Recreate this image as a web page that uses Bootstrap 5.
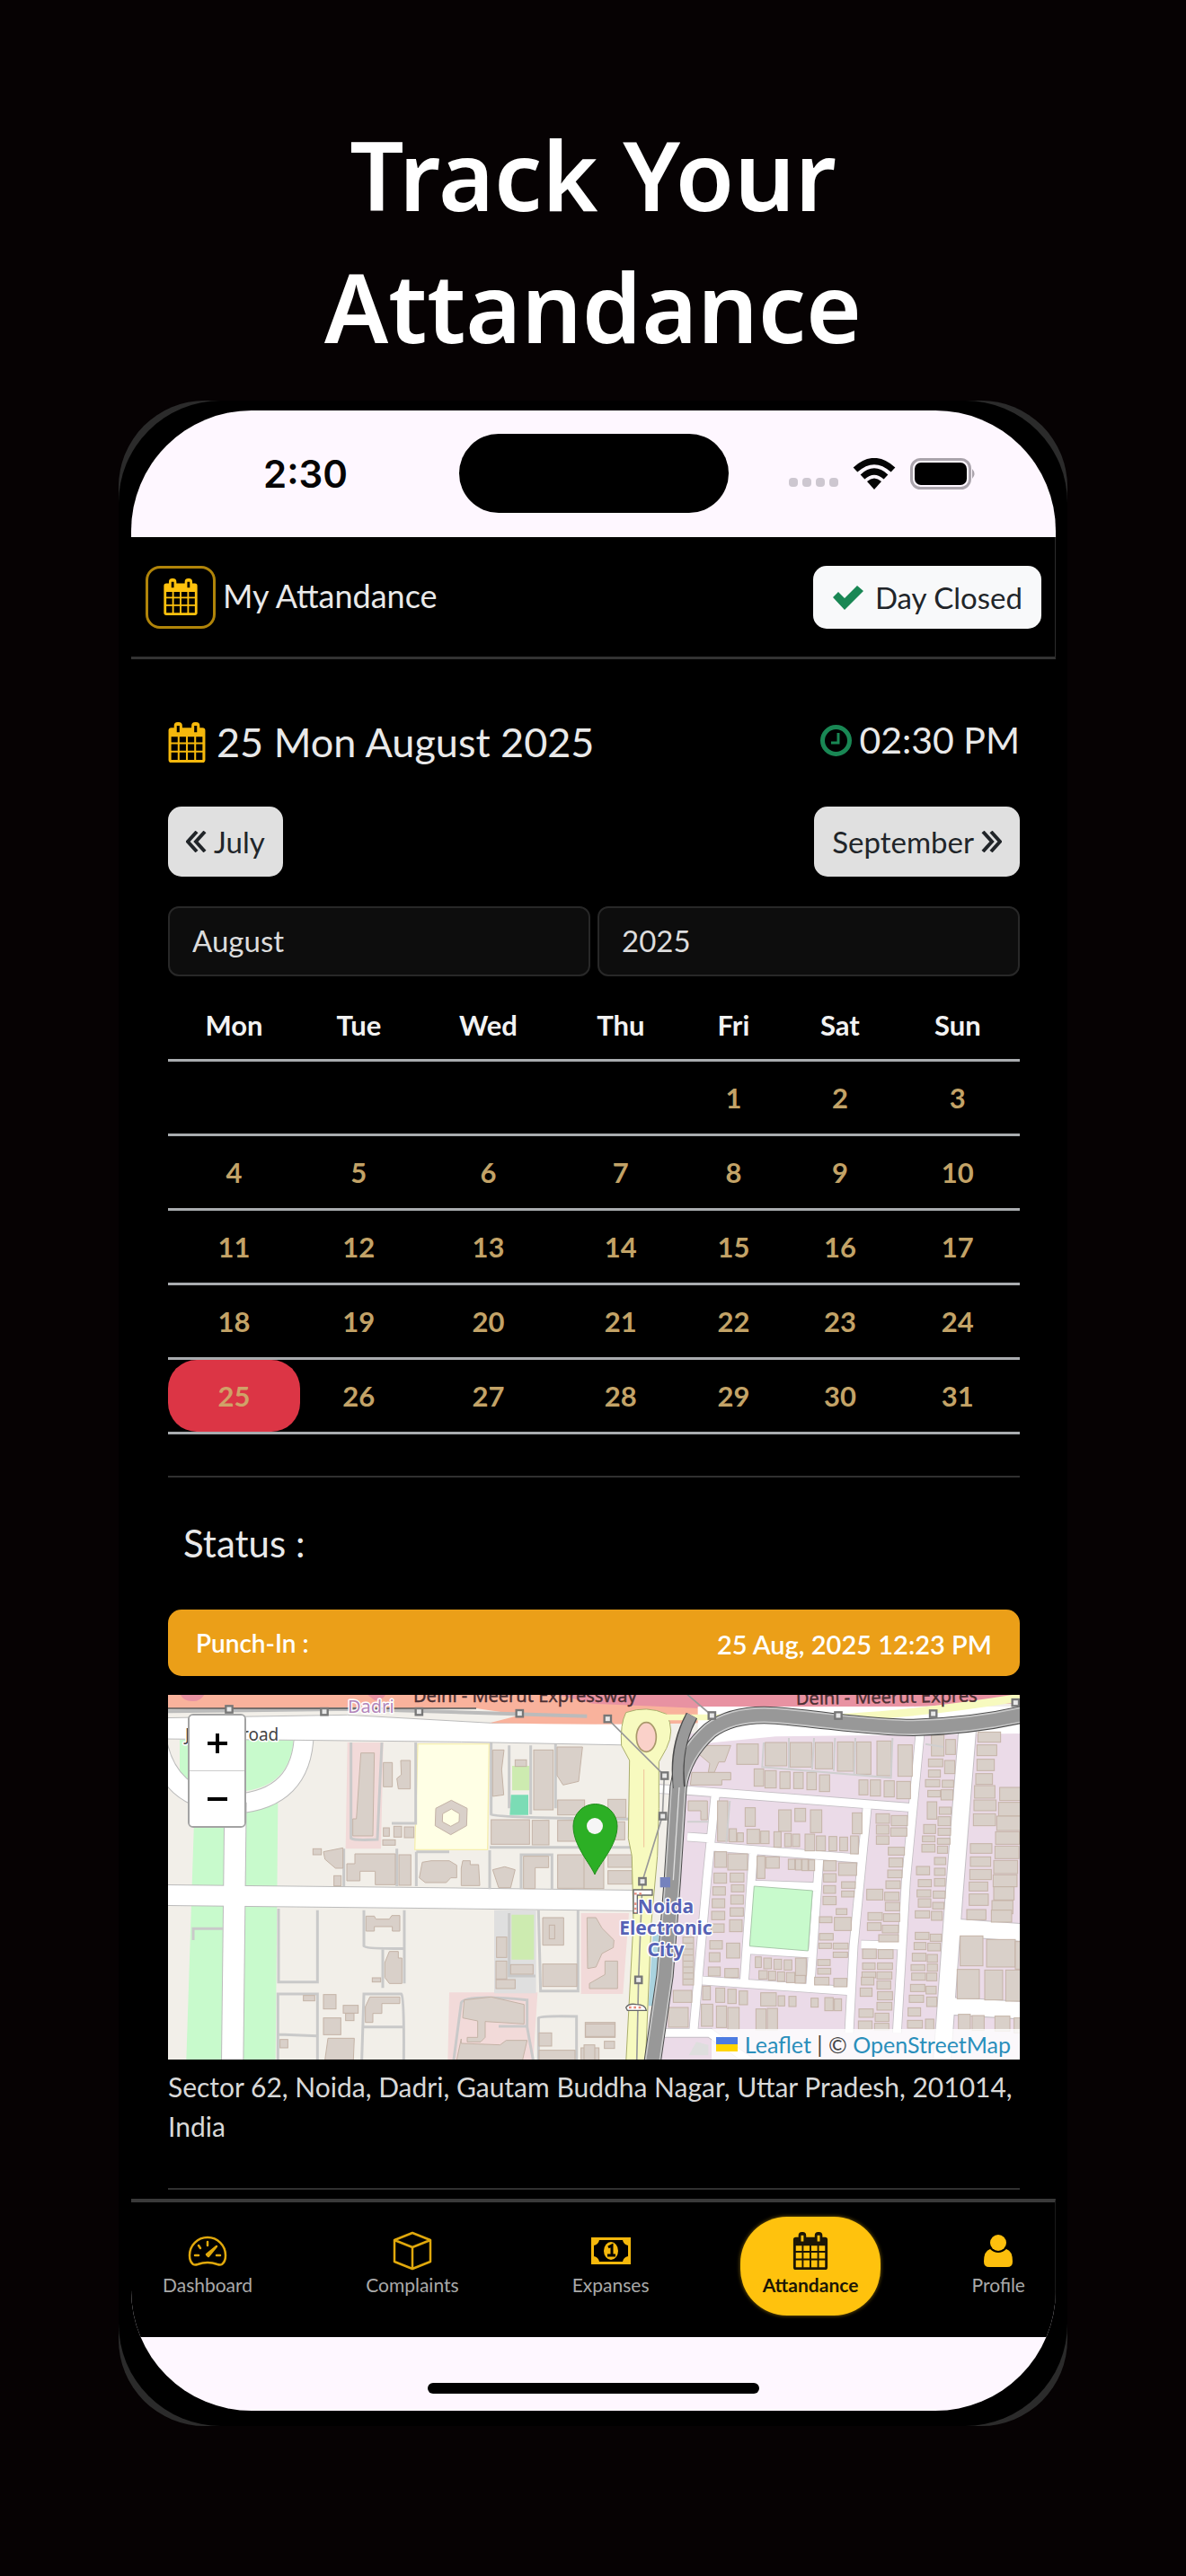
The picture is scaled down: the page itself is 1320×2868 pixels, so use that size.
<!DOCTYPE html>
<html lang="en">
<head>
<meta charset="utf-8">
<meta name="viewport" content="width=device-width, initial-scale=1">
<title>Track Your Attandance</title>
<link rel="stylesheet" href="https://cdn.jsdelivr.net/npm/bootstrap@5.3.0/dist/css/bootstrap.min.css">
<style>
body{background:#060203;font-family:Lato,"Open Sans",sans-serif;color:#e9e9e9}
.hero{font:600 106px/147px "Noto Sans","Open Sans",sans-serif;color:#fff;padding-top:121px;margin-bottom:31px}
.phone{width:80%;margin:0 auto 166px;background:#2b2b2b;border-radius:96px}
.shell{background:#000;border-radius:114px;padding:11px 13px 17px 14px}
.viewport-area{border-radius:134px;overflow:hidden;background:#fef7ff}
.statusbar{height:141px;position:relative;padding:0 88px 0 147px;color:#050505}
.clock-text{font:600 42px/50px Inter,sans-serif}
.island{position:absolute;left:50%;top:26px;width:300px;height:88px;margin-left:-150px;border-radius:44px;background:#000}
.signal{gap:5px}
.signal i{width:10px;height:10px;border-radius:4px;background:#cdc7d0}
.app-area{background:#000}
.apphead{height:136px;border-bottom:3px solid #333;border-right:1px solid #2c2c2c;padding:0 15px 0 16px}
.cal-btn{width:78px;height:70px;border:3px solid #b08409;border-radius:16px;background:none;padding:0}
.title-text{font-size:36px;line-height:44px;padding-bottom:4px}
.pale-btn{border-radius:15px;font-size:33px;line-height:44px;border:0;color:#212529}
.closed-btn{height:70px;background:#f8f9fa;padding:0 21px}
.month-btn{height:78px;background:#e0e0e0;padding:0 20px}
.content-area{padding:65px 40px 0 41px}
.date-row{height:54px;margin-bottom:45px}
.date-text{font-size:45px;line-height:54px}
.time-text{font-size:41px;line-height:54px}
.time-part{padding-bottom:4px}
.picker{appearance:none;height:78px;background:#0d0d0d;border:2px solid #282828;border-radius:12px;color:#dcdcdc;font-size:33px;padding:0 25px;width:100%}
.pickers{gap:8px;margin:33px 0 16px}
.days{width:100%;table-layout:fixed;border-collapse:separate;border-spacing:0;text-align:center;font-size:31px;line-height:40px;font-weight:700;color:#c3a367}
.days th{height:79px;color:#f2f2f2;padding:0;border-bottom:3px solid #a9acaf}
.days td{height:83px;padding:0;border-bottom:3px solid #a9acaf}
.today-cell span{display:flex;align-items:center;justify-content:center;height:80px;background:#dc3545;border-radius:32px;color:#d0a268}
.rule{height:2px;background:#303030}
.month-end{margin-top:46px}
.status-text{font-size:42px;line-height:50px;padding:48px 17px 49px}
.punch{height:74px;border-radius:15px;background:#eb9f18;color:#fff;padding:0 31px;font-weight:600}
.punch-label{font-size:28px;line-height:40px}
.punch-time{font-size:29px;line-height:40px}
.map-box{position:relative;margin-top:21px;overflow:hidden}
.map-box svg.map-art{display:block;width:100%;height:auto}
.zoomer{position:absolute;left:22px;top:21px;width:65px;border:2px solid #a3a3a3;border-radius:6px;overflow:hidden;background:#fff}
.zoomer button{display:flex;align-items:center;justify-content:center;width:100%;height:61px;border:0;background:#fff;padding:0}
.zoomer button+button{border-top:1px solid #ccc;height:62px}
.attrib{position:absolute;right:0;bottom:0;height:34px;background:rgba(255,255,255,.8);padding:0 10px 0 5px;font-size:25px;line-height:34px;color:#444}
.attrib a{color:#2a8fbb;text-decoration:none}
.address{font-size:30px;line-height:44px;margin:8px 0 47px;color:#d8d8d8}
.tabbar{margin-top:10px;height:154px;border-top:4px solid #3a3a3a;border-right:1px solid #1a1a1a;padding:16px 8px 24px 10px}
.tabbar a{display:flex;flex-direction:column;align-items:center;height:110px;padding:16px 25px 0;border-radius:52px;text-decoration:none;color:#a9a9a9;font-size:21px;line-height:28px;gap:2px}
.tabbar a svg{height:44px;width:44px;color:#e0a80c}
.tabbar a.on{background:#ffc20d;color:#1c1606;font-weight:700;box-shadow:0 0 4px #8a6a0a}
.tabbar a.on svg{color:#1c1606}
.homebar{height:82px;padding-top:51px}
.homebar div{width:369px;height:12px;border-radius:6px;background:#000}
</style>
<script src="https://cdn.jsdelivr.net/npm/bootstrap@5.3.0/dist/js/bootstrap.bundle.min.js"></script>
</head>
<body>
<svg width="0" height="0" class="position-absolute" aria-hidden="true">
  <symbol id="cal" viewBox="0 0 40 44"><path fill="currentColor" fill-rule="evenodd" d="M3 6H6V4Q6 0 10 0H11Q15 0 15 4V6H25V4Q25 0 29 0H30Q34 0 34 4V6H37Q40 6 40 9V41Q40 44 37 44H3Q0 44 0 41V9Q0 6 3 6ZM9 4V11H12V4ZM28 4V11H31V4ZM3 16V22H10V16ZM12 16V22H19V16ZM21 16V22H28V16ZM30 16V22H37V16ZM3 24V31H10V24ZM12 24V31H19V24ZM21 24V31H28V24ZM30 24V31H37V24ZM3 33V41H10V33ZM12 33V41H19V33ZM21 33V41H28V33ZM30 33V41H37V33Z"/></symbol>
</svg>

<h1 class="hero text-center">Track Your<br>Attandance</h1>

<main class="phone"><div class="shell"><div class="viewport-area">
  <div class="statusbar d-flex align-items-center justify-content-between">
    <span class="clock-text">2:30</span>
    <div class="island"></div>
    <div class="d-flex align-items-end">
      <div class="signal d-flex me-3 pb-1"><i></i><i></i><i></i><i></i></div>
      <svg class="me-3" width="48" height="36" viewBox="0 0 48 36" fill="none" stroke="#050505" stroke-width="7"><path d="M3 13Q24-6 45 13"/><path d="M11 21Q24 9 37 21"/><path d="M16 26Q24 19 32 26L24 35Z" fill="#050505" stroke="none"/></svg>
      <svg width="74" height="36" viewBox="0 0 74 36"><rect x="1.500" y="1.500" width="65" height="32" rx="10" fill="none" stroke="#aaa4ac" stroke-width="3"/><rect x="5" y="5" width="58" height="25" rx="7" fill="#000"/><path d="M69 12Q74 17.500 69 23Z" fill="#aaa4ac"/></svg>
    </div>
  </div>

  <div class="app-area">
    <header class="apphead d-flex align-items-center justify-content-between">
      <div class="d-flex align-items-center">
        <button class="cal-btn d-flex align-items-center justify-content-center" aria-label="Calendar"><svg width="38" height="41" color="#ffc20d"><use href="#cal"/></svg></button>
        <span class="title-text ms-2">My Attandance</span>
      </div>
      <button class="pale-btn closed-btn d-flex align-items-center"><svg class="me-2" width="36" height="30" viewBox="0 0 36 30"><path d="M1 15L7 9L14 16L28 2L35 8L14 29Z" fill="#198754"/></svg><span class="ps-1">Day Closed</span></button>
    </header>

    <section class="content-area">
      <div class="date-row d-flex align-items-center justify-content-between">
        <div class="d-flex align-items-center"><svg class="me-2" width="42" height="45" color="#f5b80c"><use href="#cal"/></svg><span class="date-text ps-1">25 Mon August 2025</span></div>
        <div class="time-part d-flex align-items-center"><svg class="me-2" width="35" height="35" viewBox="0 0 35 35" fill="none" stroke="#198754"><circle cx="17.500" cy="17.500" r="15" stroke-width="5"/><path d="M20 9V20H12" stroke-width="3"/></svg><span class="time-text">02:30 PM</span></div>
      </div>
      <div class="d-flex justify-content-between">
        <button class="pale-btn month-btn d-flex align-items-center"><svg class="me-2" width="23" height="24" viewBox="0 0 23 24" fill="none" stroke="#212529" stroke-width="4"><path d="M12 1L2 12L12 23M21 1L11 12L21 23"/></svg>July</button>
        <button class="pale-btn month-btn d-flex align-items-center">September<svg class="ms-2" width="23" height="24" viewBox="0 0 23 24" fill="none" stroke="#212529" stroke-width="4"><path d="M11 1L21 12L11 23M2 1L12 12L2 23"/></svg></button>
      </div>
      <div class="pickers d-flex">
        <select class="picker" aria-label="Month"><option>August</option></select>
        <select class="picker" aria-label="Year"><option>2025</option></select>
      </div>
      <table class="days">
        <colgroup><col style="width:15.500%"><col style="width:13.800%"><col style="width:16.600%"><col style="width:14.500%"><col style="width:12%"><col style="width:13%"><col></colgroup>
        <thead><tr><th>Mon</th><th>Tue</th><th>Wed</th><th>Thu</th><th>Fri</th><th>Sat</th><th>Sun</th></tr></thead>
        <tbody>
          <tr><td></td><td></td><td></td><td></td><td>1</td><td>2</td><td>3</td></tr>
          <tr><td>4</td><td>5</td><td>6</td><td>7</td><td>8</td><td>9</td><td>10</td></tr>
          <tr><td>11</td><td>12</td><td>13</td><td>14</td><td>15</td><td>16</td><td>17</td></tr>
          <tr><td>18</td><td>19</td><td>20</td><td>21</td><td>22</td><td>23</td><td>24</td></tr>
          <tr><td class="today-cell"><span>25</span></td><td>26</td><td>27</td><td>28</td><td>29</td><td>30</td><td>31</td></tr>
        </tbody>
      </table>
      <div class="rule month-end"></div>
      <div class="status-text">Status :</div>
      <div class="punch d-flex align-items-center justify-content-between"><span class="punch-label">Punch-In :</span><span class="punch-time pt-1">25 Aug, 2025 12:23 PM</span></div>

      <div class="map-box">
        <svg class="map-art" viewBox="0 0 948 406" role="img" aria-label="Street map">
          <rect width="948" height="406" fill="#f2efe9"/>
          <g transform="translate(-7 -7) scale(.33333)">
            <!-- west half: parks, roads, plots -->
            <path d="M60 170H440Q430 320 280 342H60Z" fill="#c8facc"/>
            <path d="M110 380H388L380 1240H82Z" fill="#c8facc"/>
            <path d="M-20 150Q10 380 245 385Q470 370 475 150" fill="none" stroke="#bbb" stroke-width="68"/>
            <path d="M-20 150Q10 380 245 385Q470 370 475 150" fill="none" stroke="#fff" stroke-width="62"/>
            <path d="M246 380L236 1250" stroke="#bbb" stroke-width="76" fill="none"/>
            <path d="M0 690L800 698L1590 708" stroke="#bbb" stroke-width="72" fill="none"/>
            <path d="M246 380L236 1250" stroke="#fff" stroke-width="70" fill="none"/>
            <path d="M0 690L800 698L1590 708" stroke="#fff" stroke-width="66" fill="none"/>
            <path d="M620 180H740L732 535H614ZM960 1015H1255L1240 1250H955ZM1400 750H1560L1540 1020H1400Z" fill="#f2dad9"/>
            <path d="M855 185H1093L1088 538H845Z" fill="#ffffe5" stroke="#f5eeb0" stroke-width="4"/>
            <path d="M1110 740H1250V1018H1110Z" fill="#dfdfdf"/>
            <path d="M1168 755H1243V905H1168ZM1170 258H1228V340H1170Z" fill="#cdebb0"/>
            <path d="M1166 355H1224V422H1162Z" fill="#7bdcb5"/>
            <g fill="none" stroke="#c9c9c9" stroke-width="9"><path d="M632 180V500Q640 508 720 504L735 180M848 180V450H768M1100 180V420Q1110 432 1600 436M1315 180V400M1095 530H1600M1095 540V670M850 545H960M850 545V660M608 535V660M785 535V660M1200 670V555H1303V670M390 735V980H520V740M388 1240V1020H520V1240M390 1155L520 1160M675 740V860Q680 870 808 868M810 740V985M738 870V1000M668 1240L675 1020H800Q810 1030 808 1240M670 1130H808M1160 750V960H1248M1258 740L1265 1010H1390V740M1258 1240V1100Q1260 1092 1385 1095V1240M975 1240L1000 1050Q1010 1020 1220 1040V1130L1240 1240M1125 1128H1220M105 840V802H205M1160 190V400M1232 190V420"/></g>
            <g fill="#d9d0c9" stroke="#c4b3a6" stroke-width="3">
              <path d="M665 215H710L705 492H638V435H650Z"/>
              <path d="M645 552H780V655H713V610H662V642H618V585H645Z"/>
              <path fill-rule="evenodd" d="M967 373L1020 400L1018 458L965 488L913 458L915 400ZM967 402L938 418L937 445L965 460L993 445L994 418Z"/>
              <path d="M870 580L900 575H960L985 590V632H965L950 648H880L860 632ZM1005 575H1030V588H1058L1062 658H1000V600ZM1105 605L1145 595L1180 605L1165 665H1125ZM1208 560H1292V598H1247V668H1208Z"/>
              <path d="M798 240H830V335H790L785 300L800 288ZM740 247H770V328H740ZM540 545L605 532V600H580L545 570ZM1105 205H1143L1135 270L1142 355L1105 360ZM1320 195H1405L1392 310L1340 322L1320 290Z"/>
              <path d="M682 760H710L715 770H760L768 758H795V810H770V795H710V810H682ZM760 878H790V900H802V985H760L745 965V915ZM695 1030H795V1052H735V1085H705V1115H680V1062Z"/>
              <path d="M1010 1040L1100 1030L1210 1055V1120L1080 1112V1165L1065 1180H1020V1165H1055V1110L1005 1100ZM1000 1170V1185L1130 1190L1150 1175H1220L1205 1240H985ZM555 1168H643L640 1240H545ZM1272 765H1342V857H1272Z"/>
              <g data-plots="792,555,40,102;740,465,20,28;775,460,26,36;810,462,32,36;738,505,42,18;505,535,28,20;575,625,24,34;1180,238,38,22;1242,205,65,200;1100,438,128,82;1237,440,56,82;1322,440,90,70;1322,372,90,50;1322,555,90,112;1118,830,34,68;1116,910,36,60;1165,922,75,32;1116,972,64,30;1272,920,114,75;540,1022,42,48;540,1100,58,56;606,1058,50,26;614,1085,28,24;473,1025,38,18;395,1172,26,28;703,966,28,14;1260,1150,42,44;1260,1208,120,34;1414,1115,100,50;1400,1200,60,40;1294,790,18,46"></g>
            </g>
            <!-- north side: expressway and service road -->
            <path d="M0 98L620 88L1100 115L1620 110V190L1000 178L440 172L0 168Z" fill="#fff" stroke="#bbb" stroke-width="3"/>
            <path d="M0 10H1900V112Q1500 125 1095 115L1200 88L1050 66L0 66Z" fill="#f9b29c"/>
            <path d="M60 15H145Q130 45 100 42Q70 42 60 15ZM680 15H750Q740 40 712 40ZM1320 20L2900 10V48L2300 66H1800L1440 50Z" fill="#e892a2"/>
            <path d="M0 76L640 68L1420 92" stroke="#bbb" stroke-width="12" fill="none"/>
            <path d="M0 66H1050" stroke="#555" stroke-width="5"/>
          </g>
          <g transform="translate(463 -7) scale(.33333)">
            <!-- east half: housing sectors -->
            <path d="M340 150L1470 110V1260H230L270 1100Z" fill="#ebdbe8"/>
            <path d="M380 185L640 160L1460 150V60H380Z" fill="#fff"/>
            <path stroke="#c4bfc4" fill="none" stroke-width="32" d="M250 335L345 340L1100 398M438 360L410 640L365 1150M430 528L925 568M345 495L420 500M565 550L535 980M570 655L780 662M785 572L755 1000M395 975L890 1010M945 400L900 860L885 1150M925 855L1060 858M550 872L760 885M1122 150L1075 640L1045 1150M270 1150H420L560 1250"/>
            <path stroke="#fff" fill="none" stroke-width="27" d="M250 335L345 340L1100 398M438 360L410 640L365 1150M430 528L925 568M345 495L420 500M565 550L535 980M570 655L780 662M785 572L755 1000M395 975L890 1010M945 400L900 860L885 1150M925 855L1060 858M550 872L760 885M1122 150L1075 640L1045 1150M270 1150H420L560 1250"/>
            <path d="M1280 140L1235 700L1195 1250M1240 798L1470 815M1225 1060L1470 1075" stroke="#c4bfc4" stroke-width="62" fill="none"/>
            <path d="M1280 140L1235 700L1195 1250M1240 798L1470 815M1225 1060L1470 1075" stroke="#fff" stroke-width="56" fill="none"/>
            <path d="M568 660L763 675L748 876L553 860Z" fill="#c8facc" stroke="#a8c8aa" stroke-width="3"/>
            <g fill="#d9d0c9" stroke="#c4b3a6" stroke-width="3">
              <path d="M400 190H490L470 245H450L435 280H415L420 250L385 220ZM360 280H490V305H460V322H355ZM348 375H412V438H390V408H348ZM10 765H40L60 800L100 840L98 865L60 885L40 930L12 935ZM70 910H112V1002H18V985L70 955Z"/>
              <g data-plots="510,185,72,68;605,180,72,78;688,180,72,82;772,180,58,88;846,178,54,98;910,178,48,108;978,175,48,116;1048,188,48,105;568,268,32,58;604,274,38,58;654,278,34,56;700,280,32,54;744,280,32,58;786,288,34,56;918,305,30,50;956,305,34,54;1002,308,34,54;1044,310,46,58;446,375,34,135;538,398,34,62;650,405,42,72;704,400,36,44;756,405,38,76;896,415,32,70;485,468,24,44;512,482,20,30;544,470,42,48;590,476,28,42;634,478,24,52;670,484,22,44;696,486,24,42;738,486,32,56;776,492,30,50;818,494,26,48;854,496,26,46;890,492,26,60;436,545,40,52;480,552,66,54;578,560,26,74;608,562,44,38;682,570,22,34;706,570,20,36;728,570,20,38;750,572,20,36;434,616,42,34;430,662,42,28;428,702,42,30;426,744,44,28;424,786,44,28;420,842,42,28;418,882,36,30;415,930,40,30;488,616,46,30;492,655,42,24;490,690,42,30;488,732,44,28;486,772,42,40;476,850,44,50;470,935,46,30;800,575,42,34;850,582,60,42;800,618,42,28;860,645,46,22;800,658,40,26;860,676,42,20;798,694,44,28;842,735,36,20;786,762,42,20;836,764,56,44;786,818,46,22;832,850,50,20;784,850,42,18;832,880,48,18;780,905,42,20;780,934,44,20;770,964,48,26;834,968,44,28;572,896,20,36;600,900,26,36;634,904,26,34;668,906,26,34;706,900,36,60;584,942,28,28;616,944,24,30;646,946,24,32;676,948,28,34;705,958,34,26;396,994,26,46;440,1000,30,48;480,1004,28,48;518,1010,28,46;590,1016,52,44;648,1026,22,34;684,1028,24,34;758,1034,24,30;804,1032,28,44;836,1036,24,40;392,1054,38,74;442,1060,34,72;480,1065,38,74;574,1070,34,70;612,1068,34,72;282,1065,66,66;298,1008,62,40;330,830,36,160;975,418,45,32;1026,424,54,34;976,456,42,30;1024,465,54,28;976,492,42,28;1016,530,54,26;1018,566,46,30;1014,606,48,26;1008,642,48,26;944,670,54,36;1004,680,48,28;1006,714,48,28;948,748,48,26;1000,752,54,26;946,782,46,26;996,790,54,26;984,822,66,24;930,870,46,32;982,872,50,30;930,916,42,22;980,916,50,22;928,946,46,20;978,946,50,24;926,964,42,26;978,976,46,28;922,1000,40,28;980,1012,50,28;978,1048,50,26;918,1070,48,28;972,1084,46,28;916,1110,46,28;970,1118,48,22;1160,155,42,70;1208,170,32,50;1150,235,48,26;1204,240,34,44;1150,272,40,24;1140,304,48,24;1196,306,38,24;1148,340,42,22;1192,338,40,34;1146,378,32,58;1186,396,40,24;1134,454,40,30;1182,428,42,30;1182,466,42,24;1130,492,42,20;1180,500,42,20;1128,520,44,26;1180,526,34,24;1110,594,44,28;1170,564,38,24;1170,600,36,24;1116,638,44,24;1170,634,36,26;1112,672,46,24;1166,676,40,24;1116,702,42,28;1164,714,38,22;1106,742,48,24;1160,744,36,30;1106,814,46,24;1156,820,38,24;1102,848,40,24;1148,850,42,26;1096,884,46,26;1146,888,34,26;1092,922,46,20;1146,920,34,24;1094,950,46,24;1144,950,34,26;1090,988,48,24;1142,994,34,26;1086,1024,48,24;1144,1030,34,32;1082,1066,42,28;1080,1108,50,26;1140,1104,28,34;1315,145,76,34;1312,188,66,36;1312,236,58,38;1308,284,56,36;1304,324,68,42;1388,330,80,44;1302,372,74,36;1384,380,80,46;1300,418,74,40;1378,426,80,48;1374,478,80,42;1290,518,72,32;1372,526,80,42;1290,562,68,32;1368,574,80,44;1288,604,72,34;1366,622,80,40;1286,646,62,30;1368,662,68,44;1286,686,64,38;1362,708,70,44;1278,738,64,34;1360,740,68,40;1256,826,76,100;1344,838,96,92;1440,845,30,92;1246,938,74,98;1338,940,60,100;1408,940,60,104;1250,1088,40,50;1296,1092,40,50;1372,1094,50,50;1436,1100,30,50;80,555,80,42;80,608,80,45;80,370,60,60;80,445,56,60;0,440,40,60;0,550,66,118;5,1120,98,42;68,1178,34,24;0,1190,36,50"></g>
              <path d="M332 850H364M332 870H364M332 890H364M332 910H364M332 930H364M332 950H364M332 970H364" fill="none"/>
            </g>
            <path d="M600 180L595 262L1025 298L1030 165M684 165V265M768 165L762 270M838 165L834 275M906 165L902 285M487 375L475 515M345 445H415M1140 185L1200 195" fill="none" stroke="#cfcfcf" stroke-width="6"/>
            <path d="M230 820L215 1060L240 1060L250 820Z" fill="#aad3df"/>
            <!-- main avenue with roundabout -->
            <path d="M140 80Q210 55 275 85Q305 140 275 200L250 245V400L245 560L225 780L205 1250H140L165 780L160 560L148 500L152 240L125 190Q120 120 140 80Z" fill="#f7fabf" stroke="#a9ad6b" stroke-width="3"/>
            <ellipse cx="208" cy="162" rx="33" ry="49" fill="#fad1c9" stroke="#a9986b" stroke-width="5"/>
            <path d="M200 270V530" stroke="#f0c29a" stroke-width="3"/>
            <path d="M500 98Q900 120 1455 30" fill="none" stroke="#f7fabf" stroke-width="26"/>
            <path d="M270 96H480" stroke="#f7fabf" stroke-width="20"/>
            <!-- metro viaduct -->
            <g fill="none"><path d="M228 1250L270 960L295 640L315 330Q330 220 420 140Q500 80 640 90C820 105 950 130 1100 130Q1300 125 1470 85" stroke="#4c4c4c" stroke-width="58"/>
            <path d="M228 1250L270 960L295 640L315 330Q330 220 420 140Q500 80 640 90C820 105 950 130 1100 130Q1300 125 1470 85" stroke="#c9c9c9" stroke-width="52"/><path d="M228 1250L270 960L295 640L315 330Q330 220 420 140Q500 80 640 90C820 105 950 130 1100 130Q1300 125 1470 85" stroke="#989898" stroke-width="42"/>
            <path d="M318 330Q300 200 360 90" stroke="#4c4c4c" stroke-width="42"/><path d="M318 350Q300 200 360 90" stroke="#999" stroke-width="34"/><path d="M298 640L318 330" stroke="#ddd" stroke-width="4"/></g>
            <path d="M78 100L268 290L262 425L195 643L182 972L176 1250M345 20L427 90" fill="none" stroke="#999" stroke-width="5"/>
            <path d="M165 672H228V690H178V750H165ZM140 1065Q150 1050 175 1055Q205 1055 208 1075H145Z" fill="#fff" stroke="#666" stroke-width="4"/>
            <path d="M168 685H195M172 715V750M150 1065H195" stroke="#e78b7c" stroke-width="7" stroke-dasharray="8 8"/>
            <g fill="#e8e8e8" stroke="#777" stroke-width="7" data-plots="68,90,22,22;416,79,22,22;838,79,22,22;1155,73,22,22;1430,36,22,22;258,280,22,22;252,415,22,22;184,633,22,22;171,962,22,22;-1196,58,22,22;-878,66,22,22;-562,66,22,22;-226,72,22,22"></g>
            <rect x="254" y="630" width="34" height="34" fill="#7582bd"/>
            <path d="M375 1180L415 1190V1225H350ZM340 1235L375 1215" fill="#dedede"/>
          </g>
          <g font-family="Noto Sans,Open Sans,sans-serif" paint-order="stroke" stroke-linejoin="round">
            <text x="273" y="8" font-size="20" fill="#4b2f33" stroke="#4b2f33" stroke-width=".4">Delhi - Meerut Expressway</text>
            <text x="699" y="11" font-size="20" fill="#4b2f33" stroke="#4b2f33" stroke-width=".4" transform="rotate(-1 699 11)">Delhi - Meerut Expres</text>
            <text x="200" y="20" font-size="20" fill="#b386ba" stroke="#fff" stroke-width="3">Dadri</text>
            <text x="19" y="51" font-size="19" fill="#444" stroke="#fff" stroke-width="3">J</text>
            <text x="82" y="51" font-size="19" fill="#444" stroke="#fff" stroke-width="3">road</text>
            <g font-size="21" font-weight="700" fill="#5763b5" stroke="#fff" stroke-width="3" text-anchor="middle"><text x="554" y="243">Noida</text><text x="554" y="267">Electronic</text><text x="554" y="291">City</text></g>
          </g>
          <path d="M475 200C470 188 451 168 451 146A24 24 0 0 1 500 146C500 168 480 188 475 200Z" fill="#2caf25" stroke="#1f8c1a" stroke-width="1"/><circle cx="475" cy="146" r="9" fill="#f6f6f6"/>
        </svg>
        <div class="zoomer"><button aria-label="Zoom in"><svg width="22" height="22"><path d="M11 0V22M0 11H22" stroke="#000" stroke-width="4"/></svg></button><button aria-label="Zoom out"><svg width="22" height="22"><path d="M0 11H22" stroke="#000" stroke-width="4"/></svg></button></div>
        <div class="attrib d-flex align-items-center"><svg class="me-2" width="24" height="16"><path fill="#4c7be1" d="M0 0h24v8H0z"/><path fill="#ffd500" d="M0 8h24v8H0z"/></svg><span><a href="#">Leaflet</a> | © <a href="#">OpenStreetMap</a></span></div>
      </div>
      <p class="address">Sector 62, Noida, Dadri, Gautam Buddha Nagar, Uttar Pradesh, 201014, India</p>
      <div class="rule"></div>
    </section>

    <nav class="tabbar d-flex justify-content-between">
      <a href="#"><svg viewBox="0 0 44 44" fill="none" stroke="currentColor" stroke-width="2.500" stroke-linecap="round" stroke-linejoin="round"><path d="M6 37Q2 34 2 27A20 20 0 0 1 42 27Q42 34 38 37Q36 38 33 37Q22 33 11 37Q8 38 6 37ZM22 12V16M12 16L14 19M8 27H12M32 27H36"/><path d="M32 17L21 26L23 28Z" fill="currentColor"/></svg>Dashboard</a>
      <a href="#"><svg viewBox="0 0 44 44" fill="none" stroke="currentColor" stroke-width="2.500" stroke-linejoin="round"><path d="M22 2L42 10V34L22 42L2 34V10ZM2 10L22 18L42 10M22 18V42"/></svg>Complaints</a>
      <a href="#"><svg viewBox="0 0 44 44"><path fill="#f5b80c" fill-rule="evenodd" d="M0 7H44V37H0ZM9 10Q8 15 3 16V28Q8 29 9 34H35Q36 29 41 28V16Q36 15 35 10Z"/><ellipse cx="22" cy="22" rx="8" ry="10" fill="#f5b80c"/><path d="M19 18L23 16V26M18 27H27" fill="none" stroke="#000" stroke-width="3"/></svg>Expanses</a>
      <a href="#" class="on" aria-current="page"><svg><use href="#cal" x="2" y="1" width="40" height="42"/></svg>Attandance</a>
      <a href="#"><svg viewBox="0 0 44 44" fill="#fdbf0d"><circle cx="22" cy="13" r="9"/><path d="M13 20Q17 24 22 24Q27 24 31 20Q38 22 38 34Q38 40 32 40H12Q6 40 6 34Q6 22 13 20Z"/></svg>Profile</a>
    </nav>
  </div>
  <div class="homebar d-flex justify-content-center"><div></div></div>
</div></div></main>
<script>
// Expands "x,y,w,h;..." lists into map building outlines
document.querySelectorAll('[data-plots]').forEach(function (g) {
  g.dataset.plots.split(';').forEach(function (p) {
    var v = p.split(','), r = document.createElementNS('http://www.w3.org/2000/svg', 'rect');
    ['x', 'y', 'width', 'height'].forEach(function (k, i) { r.setAttribute(k, v[i]); });
    g.appendChild(r);
  });
});
</script>
</body>
</html>
